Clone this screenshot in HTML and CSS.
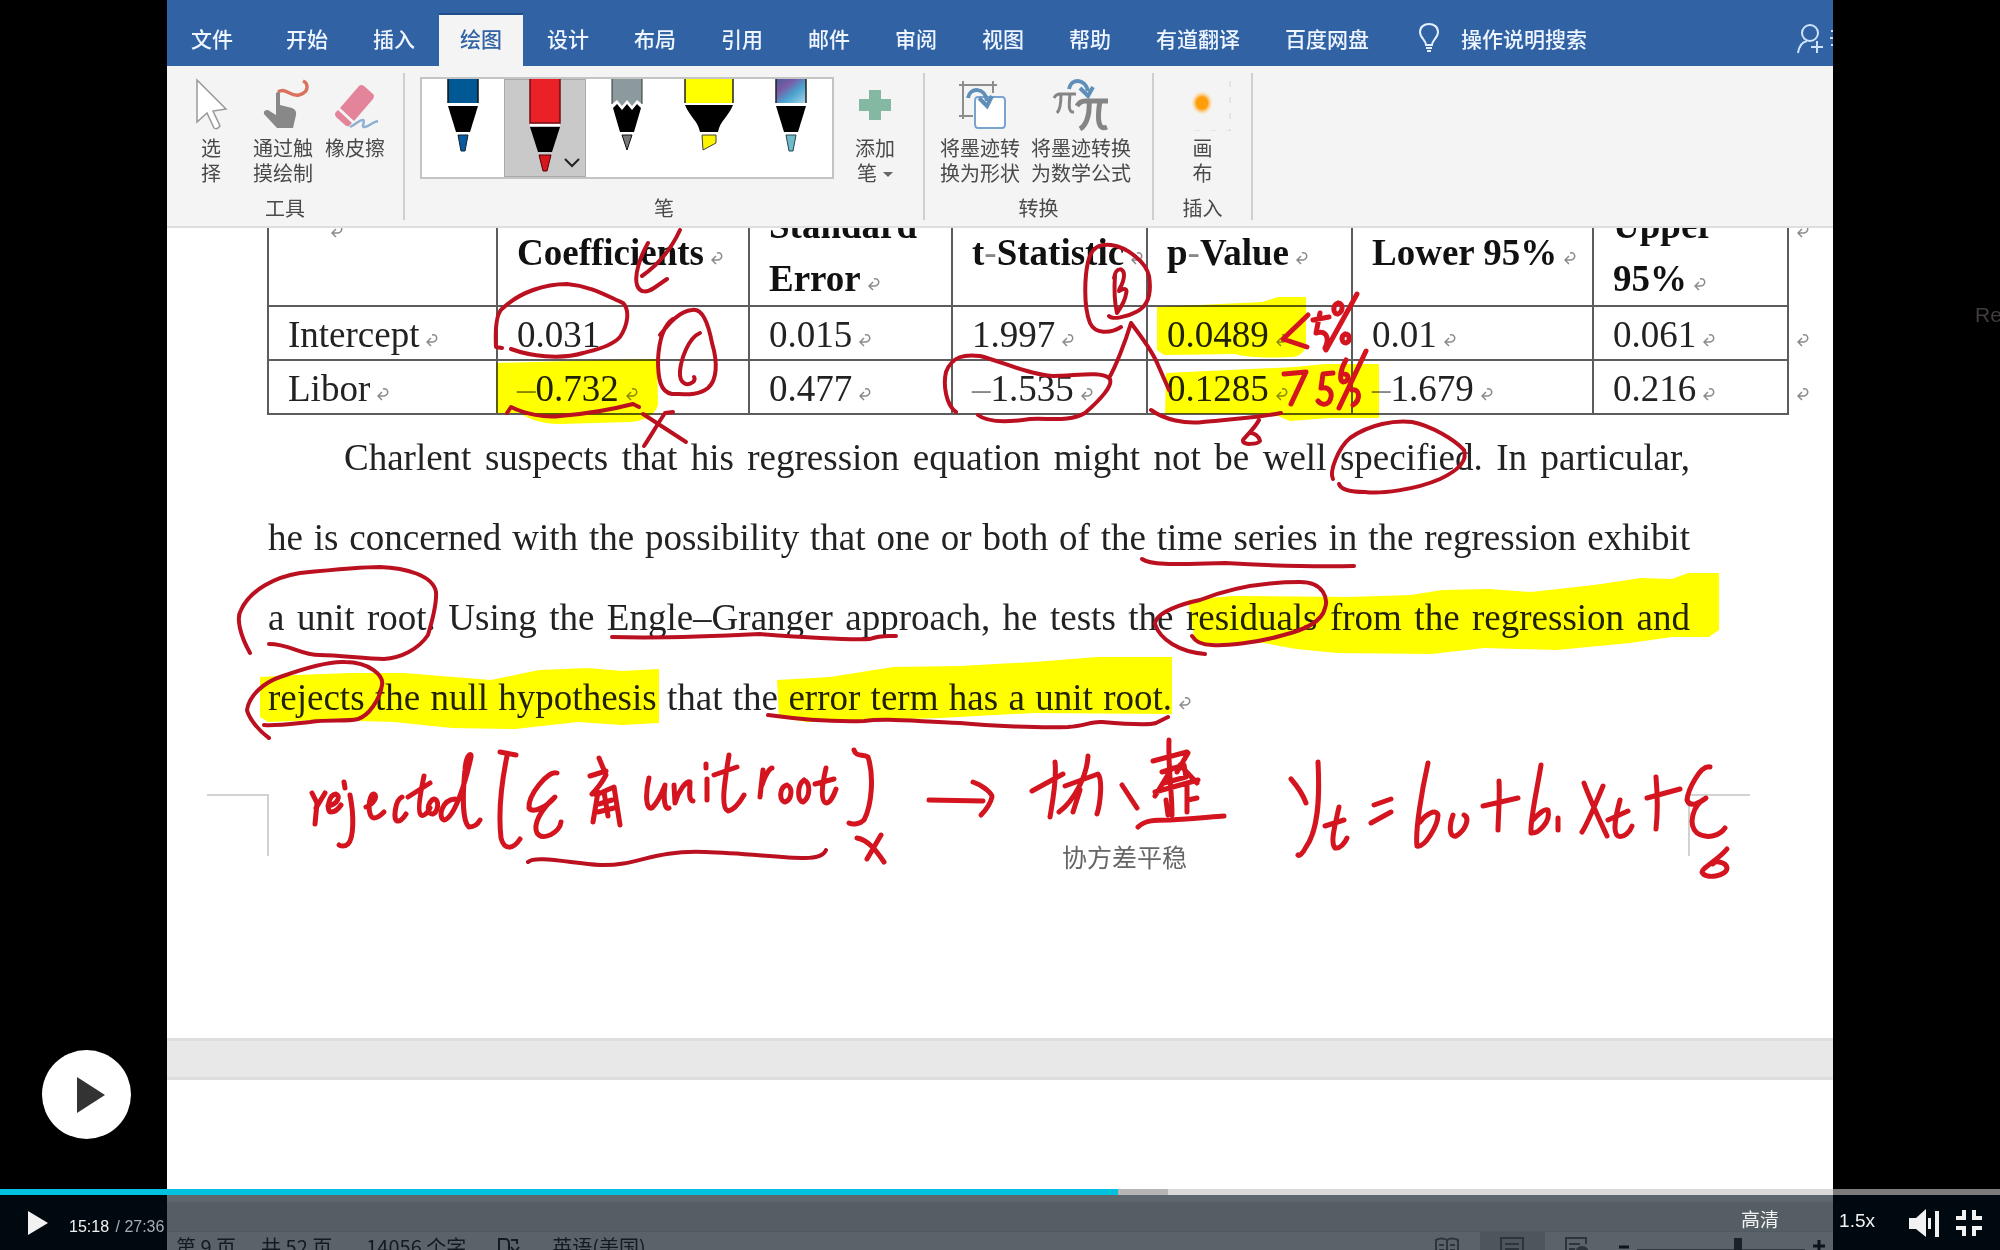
FILE: index.html
```
<!DOCTYPE html>
<html lang="zh-CN">
<head>
    <meta charset="UTF-8">
    <title>课程视频</title>
    <link rel="stylesheet" href="styles.css">
</head>
<body>

<!-- shared symbols -->
<svg class="defs" aria-hidden="true">
    <symbol id="mark" viewBox="0 0 12 14">
        <path d="M6 2 C11 0 13 8 7 9 H2 M5 5 L1 9 L5 13" fill="none" stroke="#8a8a8a" stroke-width="1.5"/>
    </symbol>
    <linearGradient id="galaxy" x1="0" y1="0" x2="1" y2="1">
        <stop offset="0" stop-color="#4c5d9c"/>
        <stop offset="0.3" stop-color="#7a5aa6"/>
        <stop offset="0.6" stop-color="#4aa3cf"/>
        <stop offset="1" stop-color="#a9d6e8"/>
    </linearGradient>
    <radialGradient id="sun">
        <stop offset="0.5" stop-color="#ff9d0a"/>
        <stop offset="1" stop-color="#ffd9a0" stop-opacity="0"/>
    </radialGradient>
</svg>

<div class="player">
    <main class="frame">
        <nav class="tabs">
            <a class="tab file" href="#">文件</a>
            <a class="tab" href="#">开始</a>
            <a class="tab" href="#">插入</a>
            <a class="tab active" href="#">绘图</a>
            <a class="tab" href="#">设计</a>
            <a class="tab" href="#">布局</a>
            <a class="tab" href="#">引用</a>
            <a class="tab" href="#">邮件</a>
            <a class="tab" href="#">审阅</a>
            <a class="tab" href="#">视图</a>
            <a class="tab" href="#">帮助</a>
            <a class="tab" href="#">有道翻译</a>
            <a class="tab" href="#">百度网盘</a>
            <button class="tell-me">
                <svg width="22" height="30" viewBox="0 0 22 30" fill="none" stroke="#e4efff" stroke-width="2">
                    <path d="M8 22 C8 17 2 15 2 9 C2 4 6 1 11 1 C16 1 20 4 20 9 C20 15 14 17 14 22 Z M8 25 H14 M9 28 H13"/>
                </svg>
                <span>操作说明搜索</span>
            </button>
            <button class="share" aria-label="共享">
                <svg width="36" height="30" viewBox="0 0 36 30" fill="none" stroke="#cfe2fb" stroke-width="2">
                    <circle cx="13" cy="9" r="8"/>
                    <path d="M1 29 C2 22 5 18 10 17 M20 17 V29 M14 23 H26"/>
                    <path d="M34 7 H36 M33 14 H36 M34 21 H36"/>
                </svg>
            </button>
        </nav>

        <div class="ribbon">
            <section class="group tools">
                <div class="buttons">
                    <button class="tool">
                        <svg width="54" height="54" viewBox="0 0 54 54">
                            <path d="M13 3 V45 L23 36 L30 51 Q33 53 36 49 L29 34 L42 32 Z" fill="#fff" stroke="#999" stroke-width="1.5"/>
                        </svg>
                        <span>选<br>择</span>
                    </button>
                    <button class="tool">
                        <svg width="54" height="54" viewBox="0 0 54 54">
                            <path d="M22 15 C30 10 34 20 43 18 C54 15 52 6 47 4" fill="none" stroke="#d9735e" stroke-width="3.5"/>
                            <path d="M20 16 Q22 14 24 16 V28 L36 31 Q41 33 40 38 L37 51 H21 L8 37 Q7 33 12 33 L20 38 Z" fill="#888"/>
                        </svg>
                        <span>通过触<br>摸绘制</span>
                    </button>
                    <button class="tool">
                        <svg width="54" height="54" viewBox="0 0 54 54">
                            <path d="M31 9 Q33 7 36 9 L45 17 Q47 19 45 22 L26 44 L12 31 Z M10 33 L24 46 L21 49 Q19 50 17 48 L8 40 Q6 37 8 35 Z" fill="#e3849a"/>
                            <path d="M22 50 C30 46 32 42 35 43 C38 44 32 51 37 50 C42 49 44 45 50 44" fill="none" stroke="#8fb0d4" stroke-width="2.5"/>
                        </svg>
                        <span>橡皮擦</span>
                    </button>
                </div>
                <h2>工具</h2>
            </section>

            <section class="group pens">
                <div class="buttons">
                    <div class="gallery">
                        <button class="pen" aria-label="蓝色笔">
                            <svg width="50" height="98" viewBox="0 0 50 98">
                                <path d="M10 0 H40 V24 H10 Z" fill="#005895"/>
                                <path d="M10 0 V24 M40 0 V24" stroke="#111" stroke-width="1.5"/>
                                <path d="M10 27 H40 L32 53 H18 Z"/>
                                <path d="M20 56 H30 L27 72 H23 Z" fill="#0a5aa0" stroke="#123" stroke-width="1"/>
                            </svg>
                        </button>
                        <button class="pen selected" aria-label="红色笔">
                            <svg width="50" height="98" viewBox="0 0 50 98">
                                <path d="M10 0 H40 V44 H10 Z" fill="#ea2127"/>
                                <path d="M10 0 V44 H40 V0" fill="none" stroke="#7a0d10" stroke-width="1.5"/>
                                <path d="M10 46 H40" stroke="#fff" stroke-width="2"/>
                                <path d="M10 48 H40 L32 73 H18 Z"/>
                                <path d="M19 76 H31 L27 92 H23 Z" fill="#d5161c" stroke="#500" stroke-width="1"/>
                            </svg>
                            <svg class="chevron" width="16" height="10" viewBox="0 0 16 10">
                                <path d="M1 1 L8 8 L15 1" fill="none" stroke="#222" stroke-width="2"/>
                            </svg>
                        </button>
                        <button class="pen" aria-label="铅笔">
                            <svg width="50" height="98" viewBox="0 0 50 98">
                                <path d="M10 0 H40 V25 L35 21 L30 27 L25 21 L20 27 L15 21 L10 25 Z" fill="#8c9a9e"/>
                                <path d="M10 0 V25 M40 0 V25" stroke="#333" stroke-width="1"/>
                                <path d="M11 29 L15 25 L20 31 L25 25 L30 31 L35 25 L39 29 L32 53 H18 Z"/>
                                <path d="M20 56 H30 L25 71 Z" fill="#777" stroke="#111" stroke-width="1"/>
                            </svg>
                        </button>
                        <button class="pen" aria-label="荧光笔">
                            <svg width="50" height="98" viewBox="0 0 50 98">
                                <path d="M1 0 H49 V24 H1 Z" fill="#ff0"/>
                                <path d="M1 0 V24 M49 0 V24" stroke="#222" stroke-width="1.5"/>
                                <path d="M1 26 H49 C44 38 36 42 34 53 H16 C14 42 6 38 1 26 Z"/>
                                <path d="M18 56 H32 V64 L19 71 Z" fill="#fbf300" stroke="#443" stroke-width="1"/>
                            </svg>
                        </button>
                        <button class="pen" aria-label="银河笔">
                            <svg width="50" height="98" viewBox="0 0 50 98">
                                <path d="M10 0 H40 V24 H10 Z" fill="url(#galaxy)"/>
                                <path d="M10 0 V24 M40 0 V24" stroke="#222" stroke-width="1.5"/>
                                <path d="M10 27 H40 L32 53 H18 Z"/>
                                <path d="M20 56 H30 L27 72 H23 Z" fill="#6fb9c8" stroke="#245" stroke-width="1"/>
                            </svg>
                        </button>
                    </div>
                    <button class="tool">
                        <svg width="54" height="54" viewBox="0 0 54 54">
                            <path d="M21 13 H33 V22 H43 V34 H33 V43 H21 V34 H11 V22 H21 Z" fill="#84b8a2"/>
                        </svg>
                        <span>添加<br>笔<i class="caret"></i></span>
                    </button>
                </div>
                <h2>笔</h2>
            </section>

            <section class="group convert">
                <div class="buttons">
                    <button class="tool">
                        <svg width="54" height="54" viewBox="0 0 54 54">
                            <path d="M10 4 V42 M6 8 H44 M40 4 V16 M6 39 H20" fill="none" stroke="#8d8d8d" stroke-width="2"/>
                            <path d="M22 24 Q22 20 25 20 H49 Q52 20 52 24 V47 Q52 51 49 51 H25 Q22 51 22 47 Z" fill="#fff" stroke="#7ba3cf" stroke-width="2"/>
                            <path d="M15 21 C17 10 32 10 34 24 M26 21 L34 29 L39 19" fill="none" stroke="#5f8fb8" stroke-width="4"/>
                        </svg>
                        <span>将墨迹转<br>换为形状</span>
                    </button>
                    <button class="tool">
                        <svg width="58" height="54" viewBox="0 0 58 54">
                            <path d="M2 21 Q4 17 8 17 H24 M9 17 C9 27 8 33 5 36 M18 17 C17 28 16 36 22 35" fill="none" stroke="#858585" stroke-width="3"/>
                            <path d="M25 29 Q28 24 33 24 H56 M37 24 C38 36 35 48 28 52 M48 24 C45 42 46 54 55 50" fill="none" stroke="#858585" stroke-width="5"/>
                            <path d="M17 12 C19 1 33 1 36 14 M28 11 L36 19 L41 10" fill="none" stroke="#5f8fb8" stroke-width="4"/>
                        </svg>
                        <span>将墨迹转换<br>为数学公式</span>
                    </button>
                </div>
                <h2>转换</h2>
            </section>

            <section class="group insert">
                <div class="buttons">
                    <button class="tool">
                        <svg width="58" height="54" viewBox="0 0 58 54">
                            <ellipse cx="28" cy="26" rx="11" ry="12" fill="url(#sun)"/>
                            <path d="M56 4 V54 H16" fill="none" stroke="#dedede" stroke-width="1.5" stroke-dasharray="6 10"/>
                        </svg>
                        <span>画<br>布</span>
                    </button>
                </div>
                <h2>插入</h2>
            </section>
        </div>

        <div class="document">
            <article class="page">
                <table class="results">
                    <colgroup>
                        <col class="c-name"><col class="c-coef"><col class="c-err"><col class="c-t">
                        <col class="c-p"><col class="c-low"><col class="c-up"><col class="c-end">
                    </colgroup>
                    <tr class="head">
                        <th class="blank"><svg class="mark"><use href="#mark"/></svg></th>
                        <th>Coefficients<svg class="mark"><use href="#mark"/></svg></th>
                        <th>Standard<br>Error<svg class="mark"><use href="#mark"/></svg></th>
                        <th>t<span class="dash">-</span>Statistic<svg class="mark"><use href="#mark"/></svg></th>
                        <th>p<span class="dash">-</span>Value<svg class="mark"><use href="#mark"/></svg></th>
                        <th>Lower 95%<svg class="mark"><use href="#mark"/></svg></th>
                        <th>Upper<br>95%<svg class="mark"><use href="#mark"/></svg></th>
                        <td class="end top"><svg class="mark"><use href="#mark"/></svg></td>
                    </tr>
                    <tr>
                        <td>Intercept<svg class="mark"><use href="#mark"/></svg></td>
                        <td>0.031</td>
                        <td>0.015<svg class="mark"><use href="#mark"/></svg></td>
                        <td>1.997<svg class="mark"><use href="#mark"/></svg></td>
                        <td>0.0489<svg class="mark"><use href="#mark"/></svg></td>
                        <td>0.01<svg class="mark"><use href="#mark"/></svg></td>
                        <td>0.061<svg class="mark"><use href="#mark"/></svg></td>
                        <td class="end"><svg class="mark"><use href="#mark"/></svg></td>
                    </tr>
                    <tr>
                        <td>Libor<svg class="mark"><use href="#mark"/></svg></td>
                        <td><span class="dash">–</span>0.732<svg class="mark"><use href="#mark"/></svg></td>
                        <td>0.477<svg class="mark"><use href="#mark"/></svg></td>
                        <td><span class="dash">–</span>1.535<svg class="mark"><use href="#mark"/></svg></td>
                        <td>0.1285<svg class="mark"><use href="#mark"/></svg></td>
                        <td><span class="dash">–</span>1.679<svg class="mark"><use href="#mark"/></svg></td>
                        <td>0.216<svg class="mark"><use href="#mark"/></svg></td>
                        <td class="end"><svg class="mark"><use href="#mark"/></svg></td>
                    </tr>
                </table>

                <p class="text">
                    <span class="line first">Charlent suspects that his regression equation might not be well specified. In particular,</span>
                    <span class="line">he is concerned with the possibility that one or both of the time series in the regression exhibit</span>
                    <span class="line">a unit root. Using the Engle–Granger approach, he tests the residuals from the regression and</span>
                    <span class="line last">rejects the null hypothesis that the error term has a unit root.<svg class="mark"><use href="#mark"/></svg></span>
                </p>
            </article>
            <div class="page-gap"></div>

            <!-- highlighter strokes -->
            <svg class="ink highlighter" viewBox="167 228 1666 810">
                <path d="M496 363 L607 360 L657 359 L658 405 C655 415 645 421 630 422 L560 424 C540 424 527 418 520 413 L496 413 Z"/>
                <path d="M1157 307 L1262 302 L1278 297 L1306 297 L1306 347 C1302 355 1297 357 1290 357 C1270 358 1250 358 1235 354 L1164 355 L1157 350 Z"/>
                <path d="M1166 373 L1295 367 L1325 364 L1379 364 L1379 418 L1330 418 L1290 421 L1273 414 L1165 414 Z"/>
                <path d="M1188 600 L1233 596 L1348 597 L1411 595 L1442 590 L1489 589 L1531 592 L1594 585 L1641 578 L1672 579 L1688 573 L1719 573 L1719 630 L1709 637 L1672 637 L1630 643 L1557 650 L1484 648 L1432 654 L1337 653 L1296 649 L1264 643 L1195 643 Z"/>
                <path d="M260 677 L297 675 L350 673 L404 673 L491 680 L539 670 L588 668 L622 671 L659 669 L659 723 L622 725 L578 722 L515 729 L452 728 L394 722 L321 720 L268 722 L260 717 Z"/>
                <path d="M777 680 L830 677 L893 667 L960 666 L1034 662 L1097 657 L1172 657 L1172 714 L1034 713 L940 718 L806 722 L779 717 Z"/>
            </svg>

            <!-- pen strokes, margin corners and the typed note -->
            <svg class="ink" viewBox="167 228 1666 810">
                <path class="corner" d="M207 795 H268 V856 M1750 795 H1689 V856"/>
                <text class="note" x="1062" y="867">协方差平稳</text>
                <g class="pen-line">
                    <path d="M502 348 L496 347 C495 327 497 312 503 308 C520 292 545 284 567 284 C590 286 605 295 623 303 C630 310 628 325 620 337 C610 348 590 351 583 353 C560 360 530 356 511 349"/>
                    <path d="M648 243 C640 257 634 275 637 285 C640 294 648 292 654 288 L667 279 M680 230 C674 243 662 262 642 276"/>
                    <path d="M660 335 C670 322 680 311 692 310 C702 308 708 322 712 343 C718 363 717 380 708 388 C698 396 685 394 672 394 C660 392 658 378 658 360 C659 340 664 325 673 319"/>
                    <path d="M700 333 C688 338 681 360 680 371 C679 385 688 386 693 382 C695 380 695 378 694 377"/>
                    <path d="M507 413 L511 407 C525 414 545 418 560 416 C585 414 610 410 633 404 L639 407"/>
                    <path d="M643 414 L686 442 M673 412 L665 413 C657 425 650 437 644 446"/>
                    <path d="M1121 327 C1110 334 1095 334 1090 323 C1083 305 1085 275 1088 262 C1092 246 1100 244 1111 245 C1127 247 1146 262 1149 276 C1152 295 1147 307 1136 312 C1127 317 1112 320 1109 316"/>
                    <path d="M1115 275 C1114 290 1115 305 1117 313 M1114 278 C1116 266 1124 268 1124 275 C1124 284 1118 290 1119 291 C1124 288 1128 288 1126 294 C1125 302 1119 310 1117 313"/>
                    <path d="M1109 378 C1115 368 1125 343 1131 323 C1142 338 1152 350 1158 365 L1169 390"/>
                    <path d="M956 412 C946 405 943 385 946 372 C952 356 965 354 980 356 C1000 361 1030 375 1053 376 C1075 376 1100 371 1109 378 C1115 384 1100 400 1085 413 C1070 422 1050 418 1030 419 C1010 422 988 423 978 415"/>
                    <path d="M1151 410 C1165 420 1185 424 1203 422 C1225 420 1255 418 1281 413 M1259 420 C1255 428 1246 436 1243 440 C1242 446 1258 444 1260 441 C1259 436 1254 433 1251 433"/>
                    <path d="M1333 479 C1329 472 1338 448 1350 438 C1370 424 1395 420 1412 422 C1432 426 1455 440 1464 450 C1468 462 1455 472 1440 479 C1415 490 1380 494 1365 492 C1350 492 1341 490 1339 484"/>
                    <path d="M250 653 C240 635 236 618 241 610 C250 590 275 577 300 573 C330 570 360 567 380 567 C405 568 433 575 436 592 C437 605 431 625 428 635 C418 650 400 658 384 659 C365 659 340 655 320 655 C300 655 290 644 269 644"/>
                    <path d="M612 637 C650 638 700 637 760 634 C800 637 850 640 870 639 C880 635 888 636 896 636"/>
                    <path d="M269 738 C255 728 248 715 247 710 C249 695 265 682 280 677 C305 668 330 661 345 662 C370 662 384 676 382 685 C380 700 368 716 358 719 C345 722 330 719 310 722 C290 724 275 726 264 725"/>
                    <path d="M768 715 C790 718 830 722 864 721 C885 718 910 721 960 723 C990 726 1040 728 1068 727 C1085 726 1092 721 1102 722 C1125 724 1150 725 1156 723 L1168 717"/>
                    <path d="M1142 559 C1152 566 1180 564 1225 563 C1260 565 1310 567 1354 566"/>
                    <path d="M1205 654 C1180 652 1160 640 1155 624 C1155 612 1185 603 1200 600 C1225 590 1255 582 1300 582 C1325 582 1328 600 1325 608 C1322 622 1305 630 1280 636 C1255 643 1225 646 1212 645 C1202 645 1195 641 1192 636"/>
                    <path d="M528 862 C535 855 570 863 600 865 C640 866 650 850 705 852 C745 853 780 858 805 858 C818 858 824 855 826 850"/>
                </g>
                <g class="pen-line bright">
                    <path d="M1308 315 L1283 339 L1307 347 M1313 320 L1329 317 M1320 313 L1316 333 C1326 330 1330 337 1325 348 M1357 294 L1326 350 M1338 303 C1332 305 1333 315 1338 314 C1343 312 1344 303 1338 303 M1345 334 C1340 337 1342 343 1346 343 C1351 341 1350 334 1345 334"/>
                    <path d="M1284 374 L1306 372 L1291 404 M1333 373 L1323 374 L1321 388 C1330 386 1334 394 1329 402 C1325 406 1320 404 1318 401 M1346 360 C1340 370 1339 381 1343 382 C1349 382 1350 374 1344 374 M1366 351 L1339 408 M1352 390 C1360 388 1361 400 1353 405"/>
                    <path d="M312 793 L317 803 L315 824 M316 808 L325 793 M328 806 C338 804 341 796 336 794 C328 795 326 812 331 812 C335 812 339 808 341 805 M350 795 C354 815 354 838 348 844 C345 847 340 846 339 845 M344 782 L345 788"/>
                    <path d="M366 807 C374 804 378 796 374 794 C368 794 367 818 374 818 C378 818 382 814 384 812 M402 797 C395 800 393 820 397 821 C401 822 404 817 406 814 M424 776 C421 790 417 812 421 815 C424 817 428 812 430 808 M408 797 L430 783 M432 800 C426 806 428 815 433 814 C438 812 440 800 434 799"/>
                    <path d="M455 799 C441 800 438 818 444 820 C455 818 466 780 471 757 C472 752 466 754 465 770 C462 800 463 822 469 827 C474 827 478 824 480 820"/>
                    <path d="M500 752 L516 755 M507 756 C500 790 499 820 501 838 C504 850 513 850 520 839"/>
                    <path d="M557 773 C548 770 528 795 529 808 C533 814 548 806 555 797 C540 810 533 825 537 833 C543 842 560 832 561 822"/>
                    <path d="M590 776 L606 771 M599 758 L606 775 C600 786 596 790 592 794 M598 792 L593 822 M596 795 L614 787 L620 825 M599 804 L612 800 M598 812 L614 808 M604 792 L608 816"/>
                    <path d="M649 778 C645 795 646 810 652 808 C660 800 663 790 665 785 C663 800 665 810 669 808 M674 785 L675 803 C678 792 686 780 690 782 C690 790 688 800 693 801 M707 779 L707 800 M706 764 L706 768 M729 755 C725 780 720 808 728 811 C735 810 740 802 744 795 M714 775 L737 767"/>
                    <path d="M763 770 L760 797 M762 785 C765 775 770 768 772 768 M787 785 C779 787 779 801 785 802 C792 800 793 787 787 785 M804 780 C797 785 797 801 803 802 C810 798 811 783 804 780 M826 768 C822 785 820 801 826 803 C830 803 834 795 836 789 M815 784 L834 779"/>
                    <path d="M854 750 C856 757 862 754 868 757 C874 775 872 805 864 820 C860 824 853 825 849 823 M857 838 C868 840 876 850 884 862 M881 835 L867 859"/>
                    <path d="M929 800 L983 801 M973 782 C985 786 993 795 992 797 C990 805 984 812 981 815"/>
                    <path d="M1032 791 L1063 774 M1055 762 C1057 780 1052 805 1050 817 M1065 786 L1098 774 C1103 780 1100 805 1097 814 M1088 756 C1087 775 1075 800 1059 812 M1080 790 L1073 812 M1122 785 L1137 808"/>
                    <path d="M1169 740 C1168 770 1172 790 1172 815 M1153 761 L1187 752 M1162 772 L1184 765 L1186 777 L1164 783 M1172 768 L1155 796 M1155 792 L1198 780 M1188 753 L1177 772 M1180 765 L1197 783 M1187 785 L1187 812 M1188 800 L1197 798 M1166 800 L1168 815 M1138 827 C1145 820 1155 820 1170 820 C1190 819 1210 817 1224 816"/>
                    <path d="M1291 779 C1298 787 1303 795 1306 803 M1318 762 C1320 800 1318 830 1306 847 C1302 855 1299 856 1298 855 M1339 807 C1335 825 1330 843 1335 848 C1340 849 1345 843 1347 838 M1325 826 L1344 820 M1374 805 L1391 799 M1371 823 L1391 812"/>
                    <path d="M1428 763 C1422 790 1415 830 1417 846 C1425 848 1438 825 1438 815 C1436 808 1425 815 1420 822 M1453 815 C1449 825 1449 838 1456 836 C1466 830 1470 818 1464 815 M1483 806 L1518 798 M1499 781 C1500 800 1498 820 1498 830"/>
                    <path d="M1541 765 C1537 790 1530 820 1531 833 C1538 834 1551 822 1548 810 C1545 808 1537 815 1533 820 M1558 818 L1558 830 M1584 783 C1590 800 1602 825 1607 836 M1603 786 C1595 805 1587 825 1582 832 M1620 800 C1616 815 1612 832 1618 836 C1624 838 1630 832 1632 826 M1608 820 L1628 811"/>
                    <path d="M1647 798 L1680 789 M1656 777 C1658 800 1657 820 1656 829 M1710 767 C1700 765 1688 790 1687 800 C1690 808 1700 803 1706 798 C1692 805 1688 825 1697 833 C1708 840 1720 835 1725 828 M1727 849 C1718 860 1702 868 1702 872 C1705 880 1727 876 1727 868 C1726 862 1715 860 1713 864"/>
                </g>
            </svg>
        </div>

        <footer class="statusbar">
            <span>第 9 页</span>
            <span>共 52 页</span>
            <span class="words">14056 个字</span>
            <svg class="proof" width="24" height="22" viewBox="0 0 24 22" fill="none" stroke="#333" stroke-width="2">
                <path d="M8 2 H2 V20 H8 M8 2 C12 2 12 5 12 8 V20 M14 10 L22 20 M22 10 L14 20 M14 3 H20 V7"/>
            </svg>
            <span>英语(美国)</span>
            <div class="view-tools">
                <div class="views">
                    <button aria-label="阅读视图">
                        <svg width="24" height="22" viewBox="0 0 24 22" fill="none" stroke="#777" stroke-width="2"><path d="M1 3 Q7 0 12 3 Q17 0 23 3 V20 H1 Z M12 3 V20 M4 8 H9 M15 8 H20 M4 13 H9 M15 13 H20"/></svg>
                    </button>
                    <button class="on" aria-label="页面视图">
                        <svg width="24" height="22" viewBox="0 0 24 22" fill="none" stroke="#777" stroke-width="2"><path d="M1 1 H23 V22 H1 Z M5 7 H19 M5 12 H19 M5 17 H19"/></svg>
                    </button>
                    <button aria-label="Web 视图">
                        <svg width="24" height="22" viewBox="0 0 24 22" fill="none" stroke="#777" stroke-width="2"><path d="M21 7 V1 H1 V21 H9 M4 7 H15 M4 12 H10"/><circle cx="17" cy="16" r="6" fill="#777"/></svg>
                    </button>
                </div>
                <div class="zoom">
                    <button aria-label="缩小"><svg width="10" height="14"><path d="M0 9 H10" stroke="#222" stroke-width="3"/></svg></button>
                    <input type="range" min="10" max="200" value="125" aria-label="缩放">
                    <button aria-label="放大"><svg width="12" height="14"><path d="M6 2 V14 M0 8 H12" stroke="#222" stroke-width="3"/></svg></button>
                </div>
            </div>
        </footer>
    </main>

    <span class="marquee">Recording</span>

    <button class="big-play" aria-label="播放">
        <svg width="28" height="36" viewBox="0 0 28 36"><path d="M0 0 L28 18 L0 36 Z" fill="#333"/></svg>
    </button>

    <div class="controls">
        <input class="seek" type="range" min="0" max="1656" value="918" aria-label="进度" style="--played: 55.9%; --buffered: 58.4%">
        <div class="bar">
            <button class="play" aria-label="播放">
                <svg width="20" height="24" viewBox="0 0 20 24"><path d="M0 0 L20 12 L0 24 Z" fill="#f2f2f2"/></svg>
            </button>
            <span class="time">15:18 <span class="total">/ 27:36</span></span>
            <button class="quality">高清</button>
            <button class="speed">1.5x</button>
            <button class="volume" aria-label="音量">
                <svg width="30" height="28" viewBox="0 0 30 28" fill="#f2f2f2"><path d="M0 9 H7 L17 0 V28 L7 20 H0 Z M19 9 H22 V20 H19 Z M26 2 H30 V28 H26 Z"/></svg>
            </button>
            <button aria-label="退出全屏">
                <svg width="26" height="26" viewBox="0 0 26 26" fill="none" stroke="#f2f2f2" stroke-width="4"><path d="M0 8 H8 V0 M18 0 V8 H26 M0 18 H8 V26 M18 26 V18 H26"/></svg>
            </button>
        </div>
    </div>
</div>

</body>
</html>
```
FILE: styles.css
```
* {
    box-sizing: border-box;
}

body {
    margin: 0;
    background-color: #000;
    font-family: "Noto Sans CJK SC", "Liberation Sans", sans-serif;
}

button {
    border: none;
    background: none;
    padding: 0;
    margin: 0;
    font: inherit;
    color: inherit;
}

svg {
    display: block;
}

.defs {
    position: absolute;
    width: 0;
    height: 0;
}

.player {
    position: relative;
    height: 100vh;
    overflow: hidden;
}

/* 4:3 picture in the middle of the player */
.frame {
    display: flex;
    flex-direction: column;
    height: 100%;
    max-width: 134vh;
    width: 83.3%;
    margin: 0 auto;
    background-color: #fff;
    overflow: hidden;
}

/* ribbon tabs */
.tabs {
    display: flex;
    flex: none;
    gap: 3px;
    padding: 15px 0 0 3px;
    background-color: #3062a4;
    color: #eef5ff;
    font-size: 21px;
    font-weight: 500;
    line-height: 46px;
    white-space: nowrap;
}

.tab {
    height: 51px;
    padding: 0 21px;
    color: inherit;
    text-decoration: none;
}

.tab.file {
    margin-right: 8px;
}

.tab.active {
    background-color: #f4f4f4;
    color: #3062a4;
    box-shadow: 0 -2px 0 #1f4d8c;
}

.tell-me {
    display: flex;
    align-items: center;
    gap: 21px;
    height: 46px;
    margin-left: 25px;
}

.share {
    height: 48px;
    margin-left: auto;
}

/* ribbon */
.ribbon {
    display: flex;
    flex: none;
    height: 162px;
    padding: 7px 0 6px;
    background-color: #f4f4f4;
    border-bottom: 2px solid #dfdfdf;
    color: #4a4a4a;
    font-size: 20px;
    line-height: 25px;
}

.group {
    display: flex;
    flex-direction: column;
    justify-content: space-between;
    border-right: 2px solid #cfcfcf;
}

.group h2 {
    margin: 0;
    font-size: 20px;
    font-weight: 400;
    line-height: 24px;
    text-align: center;
}

.buttons {
    display: flex;
    padding-top: 4px;
}

.tools {
    width: 238px;
}

.tools .buttons {
    padding-left: 8px;
}

.pens {
    width: 520px;
}

.pens .buttons {
    padding-left: 15px;
    gap: 5px;
}

.convert {
    width: 229px;
}

.convert .buttons {
    padding-left: 15px;
    gap: 11px;
}

.insert {
    width: 99px;
}

.insert .buttons {
    justify-content: center;
}

.tool {
    display: flex;
    flex-direction: column;
    align-items: center;
    gap: 4px;
    min-width: 72px;
}

.caret {
    display: inline-block;
    margin: 0 0 4px 6px;
    border: 5px solid transparent;
    border-top-color: #666;
    border-bottom: none;
}

.gallery {
    display: flex;
    height: 102px;
    border: 2px solid #c4c4c4;
    background-color: #fff;
}

.pen {
    position: relative;
    display: flex;
    justify-content: center;
    width: 82px;
}

.pen.selected {
    background-color: #c9c9c9;
    box-shadow: inset 0 0 0 1px #aaa;
}

.chevron {
    position: absolute;
    right: 6px;
    bottom: 9px;
}

/* document */
.document {
    position: relative;
    flex: 1;
    overflow: hidden;
    background-color: #fff;
    color: #222;
    font-family: "Liberation Serif", serif;
    font-size: 37px;
}

.page {
    height: 810px;
    overflow: hidden;
}

.page-gap {
    height: 42px;
    background-color: #e8e8e8;
    border-top: 3px solid #dedede;
    border-bottom: 3px solid #dedede;
}

.results {
    margin: -31px 0 0 100px;
    table-layout: fixed;
    width: 1550px;
    border-collapse: collapse;
}

.c-name { width: 229px; }
.c-coef { width: 252px; }
.c-err { width: 203px; }
.c-t { width: 195px; }
.c-p { width: 205px; }
.c-low { width: 241px; }
.c-up { width: 195px; }
.c-end { width: 30px; }

.results th,
.results td {
    height: 54px;
    padding: 3px 0 0 19px;
    border: 2px solid #5c5c5c;
    line-height: 49px;
    text-align: left;
    white-space: nowrap;
}

.results th {
    height: 107px;
    padding-top: 0;
    line-height: 53px;
    color: #111;
}

.results .blank {
    padding-left: 62px;
    vertical-align: top;
}

.results .end {
    padding-left: 8px;
    border: none;
}

.results .top {
    vertical-align: top;
}

.dash {
    color: #888;
    font-weight: 400;
}

.mark {
    display: inline-block;
    width: 12px;
    height: 14px;
    margin-left: 7px;
}

.end .mark,
.blank .mark {
    margin-left: 0;
}

.text {
    margin: 3px 143px 0 101px;
    line-height: 80px;
}

.line {
    display: block;
    text-align: justify;
    text-align-last: justify;
    white-space: nowrap;
}

.line.first {
    padding-left: 76px;
}

.line.last {
    max-width: 923px;
}

/* hand-drawn layers lie over the page */
.ink {
    position: absolute;
    top: 0;
    left: 0;
    width: 100%;
    pointer-events: none;
}

.highlighter {
    fill: #ff0;
    mix-blend-mode: multiply;
}

.pen-line {
    fill: none;
    stroke: #bb1020;
    stroke-width: 4;
    stroke-linecap: round;
    stroke-linejoin: round;
}

.bright {
    stroke: #d4141f;
    stroke-width: 5;
}

.corner {
    fill: none;
    stroke: #d2d2d2;
    stroke-width: 2;
}

.note {
    fill: #666;
    font-family: "Noto Sans CJK SC", sans-serif;
    font-size: 25px;
}

/* word status bar, half of it below the fold */
.statusbar {
    display: flex;
    flex: none;
    height: 48px;
    padding: 30px 8px 0 9px;
    gap: 25px;
    background: linear-gradient(#e6e6e6 29px, #d9d9d9 29px, #d9d9d9 30px, #f3f3f3 30px);
    color: #333;
    font-size: 20px;
    line-height: 30px;
    white-space: nowrap;
}

.words {
    margin-left: 9px;
}

.proof {
    margin: 5px 6px 0;
}

.view-tools {
    display: flex;
    gap: 9px;
    margin-left: auto;
}

.views {
    display: flex;
}

.views button {
    width: 65px;
    height: 30px;
    padding: 5px 20px;
}

.views .on {
    background-color: #d0d0d0;
}

.zoom {
    display: flex;
    align-items: flex-start;
    gap: 8px;
    padding-top: 6px;
}

.zoom input {
    width: 168px;
    height: 24px;
    margin: 0;
    appearance: none;
    background: linear-gradient(transparent 11px, #888 11px, #888 13px, transparent 13px);
}

.zoom input::-webkit-slider-thumb {
    appearance: none;
    width: 8px;
    height: 24px;
    background-color: #444;
}

/* player overlay */
.marquee {
    position: absolute;
    top: 300px;
    left: calc(100% - 25px);
    color: #433c3c;
    font-family: "Liberation Sans", sans-serif;
    font-size: 21px;
    line-height: 30px;
}

.big-play {
    position: absolute;
    left: 42px;
    bottom: 111px;
    display: flex;
    align-items: center;
    justify-content: center;
    width: 89px;
    height: 89px;
    padding-left: 8px;
    border-radius: 50%;
    background-color: #fff;
}

.controls {
    position: absolute;
    left: 0;
    right: 0;
    bottom: 0;
    color: #f2f2f2;
}

.seek {
    display: block;
    width: 100%;
    height: 6px;
    margin: 0;
    appearance: none;
    background: linear-gradient(to right,
        #00c1de var(--played),
        rgba(150, 150, 150, 0.7) var(--played),
        rgba(150, 150, 150, 0.7) var(--buffered),
        rgba(195, 195, 195, 0.63) var(--buffered));
}

.seek::-webkit-slider-thumb {
    appearance: none;
    width: 0;
    height: 6px;
}

.bar {
    display: flex;
    align-items: center;
    height: 55px;
    padding: 0 18px 0 28px;
    background-color: rgba(0, 14, 24, 0.63);
    font-family: "Liberation Sans", "Noto Sans CJK SC", sans-serif;
    font-size: 19px;
}

.time {
    margin-left: 21px;
    padding-top: 8px;
    font-size: 16px;
}

.total {
    margin-left: 2px;
    color: #a9adb0;
}

.quality {
    margin-left: auto;
    padding-bottom: 8px;
}

.speed {
    margin: 0 34px 0 60px;
    padding-bottom: 4px;
}

.volume {
    margin-right: 17px;
}
```
